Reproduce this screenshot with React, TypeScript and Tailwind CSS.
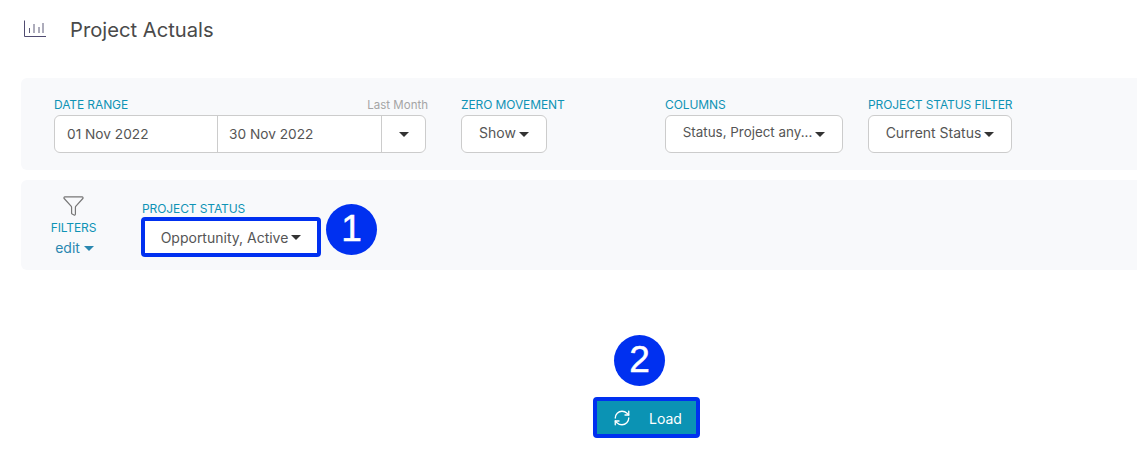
import { Funnel, RefreshCw } from "lucide-react";

const Caret = ({ className = "border-t-[#333]" }: { className?: string }) => (
  <span className={`inline-block w-0 h-0 border-x-[5px] border-x-transparent border-t-[5px] ${className}`} />
);

function Label({ children }: { children: string }) {
  return <div className="text-[12px] leading-[14px] tracking-[-0.1px] text-[#0f93b5] whitespace-nowrap">{children}</div>;
}

function DropButton({ text, className }: { text: string; className: string }) {
  return (
    <div className={`h-[38px] bg-white border border-[#ccc] rounded-md flex items-center justify-center gap-[3px] text-[#555] whitespace-nowrap ${className}`}>
      <span className="-mt-[3px]">{text}</span>
      <Caret />
    </div>
  );
}

export default function App() {
  return (
    <div className="w-[1137px] h-[449px] bg-white overflow-hidden font-['Inter','Liberation_Sans',sans-serif]">
      {/* Title */}
      <div className="flex items-start pl-[23px] pt-[16px] h-[78px]">
        <svg width="24" height="18" viewBox="0 0 24 18" fill="none" stroke="#4f4b70" strokeWidth="1" className="mt-[4px]">
          <path d="M1.5 0.5V16.5H23" />
          <path d="M6.5 8V13M11 4V13M16 7V13M20 3V13" stroke="#5d5a78" />
        </svg>
        <h1 className="ml-[23px] text-[20.2px] leading-[28px] text-[#4a4a4a] font-normal">Project Actuals</h1>
      </div>

      {/* Main filters */}
      <div className="ml-[21px] h-[92px] bg-[#f8f9fb] rounded-l-md pl-[33px] pt-[20px] flex">
        <div className="w-[372px]">
          <div className="flex justify-between items-end">
            <Label>DATE RANGE</Label>
            <span className="text-[11.5px] leading-[14px] text-[#a5a5a5] -mr-[2px]">Last Month</span>
          </div>
          <div className="h-[38px] mt-[3px] bg-white border border-[#ccc] rounded-md flex text-[13.7px] text-[#555]">
            <div className="w-[163px] border-r border-[#ccc] pl-[12px] flex items-center">01 Nov 2022</div>
            <div className="w-[164px] border-r border-[#ccc] pl-[11px] flex items-center">30 Nov 2022</div>
            <div className="flex-1 flex items-center justify-center"><Caret /></div>
          </div>
        </div>
        <div className="ml-[35px] w-[204px]">
          <Label>ZERO MOVEMENT</Label>
          <DropButton text="Show" className="w-[86px] mt-[3px] text-[14px]" />
        </div>
        <div className="w-[203px]">
          <Label>COLUMNS</Label>
          <DropButton text="Status, Project any..." className="w-[178px] mt-[3px] text-[13.4px]" />
        </div>
        <div>
          <Label>PROJECT STATUS FILTER</Label>
          <DropButton text="Current Status" className="w-[144px] mt-[3px] text-[14px]" />
        </div>
      </div>

      {/* Project status filters */}
      <div className="ml-[21px] mt-[10px] h-[90px] bg-[#f8f9fb] rounded-l-md flex">
        <div className="w-[120px] pl-[30px] pt-[14px]">
          <div className="w-[45px] flex flex-col items-center">
            <Funnel size={23} strokeWidth={1.25} className="text-[#777]" />
            <div className="text-[12px] leading-[14px] tracking-[-0.1px] text-[#0f93b5] mt-[4px]">FILTERS</div>
            <div className="text-[14px] leading-[18px] text-[#2a87b0] mt-[4px] ml-[2px] flex items-center gap-[4px]">
              edit <Caret className="border-t-[#2a87b0]" />
            </div>
          </div>
        </div>
        <div className="pt-[22px]">
          <div className="pl-[1px]"><Label>PROJECT STATUS</Label></div>
          <div className="relative w-[180px] mt-[1px]">
            <div className="h-[40px] bg-white border-[4px] border-[#0030f0] rounded-[4px] flex items-center justify-center gap-[3px] text-[14px] text-[#555] whitespace-nowrap">
              Opportunity, Active
              <Caret />
            </div>
            <div className="absolute left-[185px] top-[-13px] w-[51px] h-[51px] rounded-full bg-[#0030f0] text-white text-[37px] leading-[49px] text-center font-['Liberation_Sans',sans-serif] [-webkit-text-stroke:0.5px_white]">1</div>
          </div>
        </div>
      </div>

      {/* Load */}
      <div className="mt-[127px] ml-[593px] relative w-[107px]">
        <div className="h-[41px] bg-[#0b93b4] border-[4px] border-[#0030f0] rounded-[4px] flex items-center pl-[16px] text-white text-[14px]">
          <RefreshCw size={18} strokeWidth={1.75} />
          <span className="ml-[18px] mt-[1px]">Load</span>
        </div>
        <div className="absolute left-[21px] top-[-62px] w-[51px] h-[51px] rounded-full bg-[#0030f0] text-white text-[37px] leading-[49px] text-center font-['Liberation_Sans',sans-serif] [-webkit-text-stroke:0.5px_white]">2</div>
      </div>
    </div>
  );
}
